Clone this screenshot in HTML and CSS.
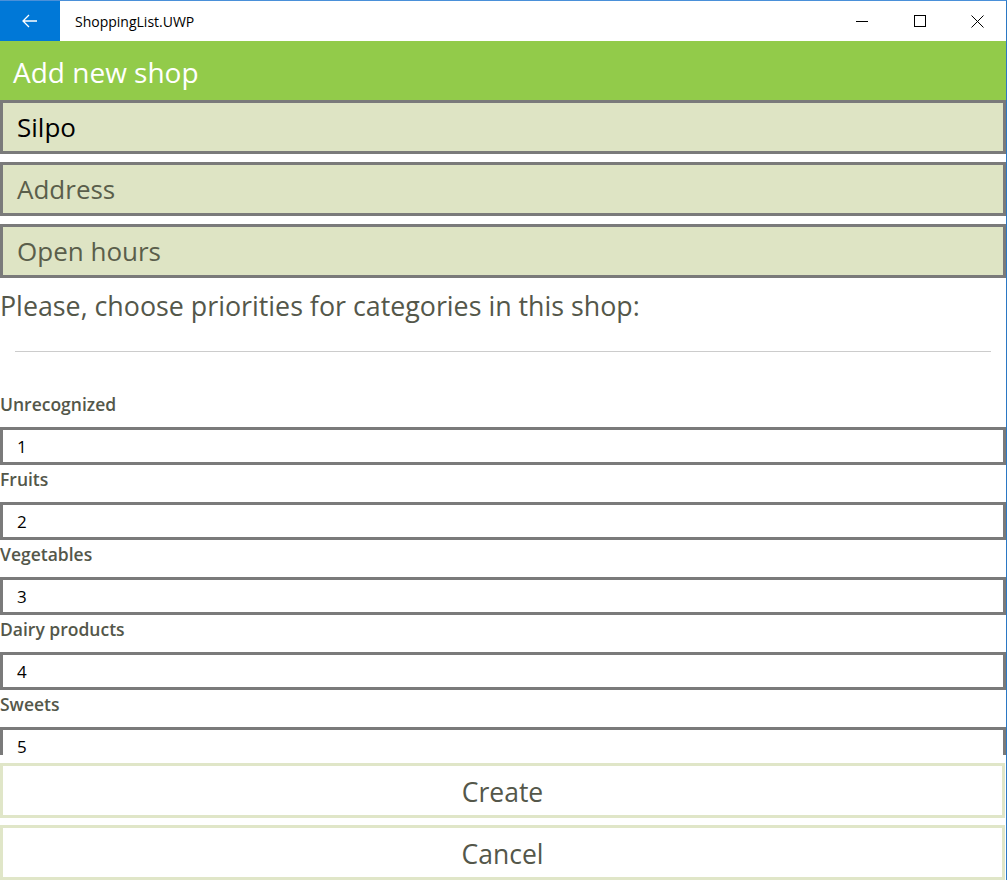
FILE: index.html
```html
<!DOCTYPE html>
<html>
<head>
<meta charset="utf-8">
<link rel="stylesheet" href="styles.css">
</head>
<body>
<div class="window">
  <div class="titlebar">
    <div class="back">
      <svg width="16" height="14" viewBox="0 0 16 14"><path d="M7 1 L1 7 L7 13 M1 7 H15" fill="none" stroke="#fff" stroke-width="1.3"/></svg>
    </div>
    <div class="title">ShoppingList.UWP</div>
    <div class="caps">
      <div class="cap"><svg width="12" height="12" viewBox="0 0 12 12"><path d="M0 6.5 H12" stroke="#000" stroke-width="1"/></svg></div>
      <div class="cap"><svg width="12" height="12" viewBox="0 0 12 12"><rect x="0.5" y="0.5" width="11" height="11" fill="none" stroke="#000" stroke-width="1"/></svg></div>
      <div class="cap"><svg width="13" height="13" viewBox="0 0 13 13"><path d="M0.5 0.5 L12.5 12.5 M12.5 0.5 L0.5 12.5" stroke="#000" stroke-width="1"/></svg></div>
    </div>
  </div>
  <div class="header">Add new shop</div>
  <div class="fields">
    <div class="tbox filled">Silpo</div>
    <div class="tbox">Address</div>
    <div class="tbox">Open hours</div>
  </div>
  <div class="scroll">
    <div class="prompt">Please, choose priorities for categories in this shop:</div>
    <div class="sep"></div>
    <div class="cat first">
      <div class="label">Unrecognized</div>
      <div class="num">1</div>
    </div>
    <div class="cat">
      <div class="label">Fruits</div>
      <div class="num">2</div>
    </div>
    <div class="cat">
      <div class="label">Vegetables</div>
      <div class="num">3</div>
    </div>
    <div class="cat">
      <div class="label">Dairy products</div>
      <div class="num">4</div>
    </div>
    <div class="cat">
      <div class="label">Sweets</div>
      <div class="num">5</div>
    </div>
  </div>
  <div class="buttons">
    <div class="btn">Create</div>
    <div class="btn">Cancel</div>
  </div>
</div>
</body>
</html>
```

FILE: styles.css
```css
html, body {
  margin: 0;
  padding: 0;
  background: #fff;
}
body {
  font-family: "Open Sans", "Noto Sans", sans-serif;
  width: 1008px;
  height: 880px;
  overflow: hidden;
}
.window {
  width: 1006px;
  height: 879px;
  border-top: 1px solid #4a90d9;
  border-right: 1px solid #2b78c4;
  display: flex;
  flex-direction: column;
  overflow: hidden;
}
.titlebar {
  height: 40px;
  display: flex;
  align-items: center;
  flex-shrink: 0;
}
.back {
  width: 60px;
  height: 40px;
  background: #0078d7;
  display: flex;
  align-items: center;
  justify-content: center;
}
.title {
  margin-left: 15px;
  font-size: 14px;
  color: #000;
  flex: 1;
}
.caps {
  display: flex;
  height: 40px;
}
.cap {
  width: 57.5px;
  height: 40px;
  display: flex;
  align-items: center;
  justify-content: center;
}
.header {
  height: 59px;
  flex-shrink: 0;
  background: #92cb4a;
  color: #fff;
  font-size: 28px;
  padding-left: 13px;
  box-sizing: border-box;
  line-height: 63px;
}
.fields {
  display: flex;
  flex-direction: column;
  gap: 8px;
  flex-shrink: 0;
}
.tbox {
  height: 54px;
  box-sizing: border-box;
  border: 3px solid #7a7a7a;
  background: #dee4c4;
  font-size: 26px;
  color: #5a5e4b;
  padding-left: 14px;
  line-height: 48px;
}
.tbox.filled {
  color: #000;
}
.scroll {
  height: 477px;
  flex-shrink: 0;
  overflow: hidden;
}
.prompt {
  font-size: 26.8px;
  color: #54574a;
  height: 56px;
  line-height: 56px;
  white-space: nowrap;
}
.sep {
  height: 1px;
  background: #cccccc;
  margin: 17px 15px 0 15px;
}
.cat {
  display: flex;
  flex-direction: column;
}
.label {
  font-size: 17.5px;
  font-weight: 600;
  color: #54574a;
  height: 37px;
  line-height: 24px;
  padding-top: 2px;
  box-sizing: border-box;
}
.cat.first .label {
  height: 75px;
  padding-top: 40px;
}
.num {
  height: 38px;
  box-sizing: border-box;
  border: 3px solid #7a7a7a;
  font-size: 17px;
  color: #000;
  padding-left: 14px;
  line-height: 33px;
}
.buttons {
  margin-top: 8px;
  display: flex;
  flex-direction: column;
  gap: 7px;
}
.btn {
  height: 55px;
  box-sizing: border-box;
  border: 3px solid #e0e6c8;
  margin-right: 1px;
  font-size: 26.5px;
  color: #54574a;
  text-align: center;
  line-height: 52px;
}
```
